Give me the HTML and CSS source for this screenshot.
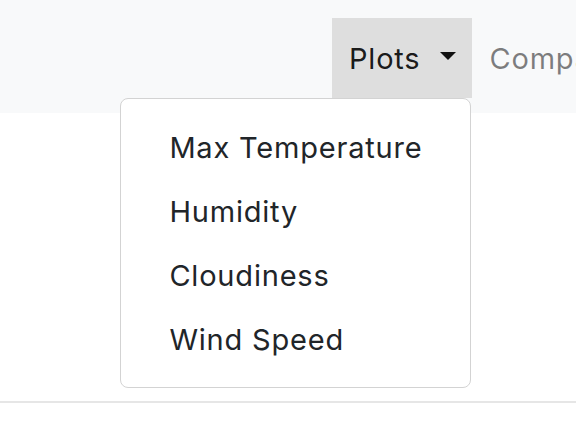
FILE: index.html
```html
<!DOCTYPE html>
<html>
<head>
<meta charset="utf-8">
<link rel="stylesheet" href="styles.css">
</head>
<body>
<nav class="navbar">
  <ul class="nav">
    <li class="nav-item dropdown">
      <a class="nav-link active">Plots<span class="caret"></span></a>
      <div class="dropdown-menu">
        <a class="dropdown-item">Max Temperature</a>
        <a class="dropdown-item">Humidity</a>
        <a class="dropdown-item">Cloudiness</a>
        <a class="dropdown-item">Wind Speed</a>
      </div>
    </li>
    <li class="nav-item">
      <a class="nav-link muted">Comparisons</a>
    </li>
  </ul>
</nav>
<main class="content"></main>
</body>
</html>
```
FILE: styles.css
```css
html, body {
  margin: 0;
  padding: 0;
  overflow: hidden;
  background: #ffffff;
  font-family: Inter, "Liberation Sans", Arial, sans-serif;
  font-size: 29px;
  letter-spacing: 0.8px;
  color: #212529;
}
.navbar {
  background: #f8f9fa;
  height: 113px;
  box-sizing: border-box;
  padding-top: 18px;
  position: relative;
  z-index: 2;
}
.nav {
  list-style: none;
  margin: 0;
  padding: 0 0 0 332px;
  display: flex;
  white-space: nowrap;
}
.nav-item {
  position: relative;
  flex: none;
}
.nav-link {
  display: flex;
  align-items: center;
  height: 80px;
  padding: 0 16px 0 17px;
  box-sizing: border-box;
  text-decoration: none;
  color: rgba(0, 0, 0, 0.5);
}
.nav-link.active {
  background: #dedede;
  color: rgba(0, 0, 0, 0.9);
}
.caret {
  display: inline-block;
  margin-left: 20px;
  width: 0;
  height: 0;
  border-top: 8px solid #111;
  border-left: 8px solid transparent;
  border-right: 8px solid transparent;
  margin-top: -4px;
}
.dropdown-menu {
  position: absolute;
  top: 80px;
  right: 1px;
  background: #fff;
  border: 1px solid #d3d3d3;
  border-radius: 8px;
  padding: 16px 0;
  display: flex;
  flex-direction: column;
}
.dropdown-item {
  display: block;
  padding: 9px 48px 7px 48px;
  line-height: 48px;
  color: #212529;
  white-space: nowrap;
}
.content {
  height: 288px;
  border-bottom: 2px solid #e6e6e6;
}
```
